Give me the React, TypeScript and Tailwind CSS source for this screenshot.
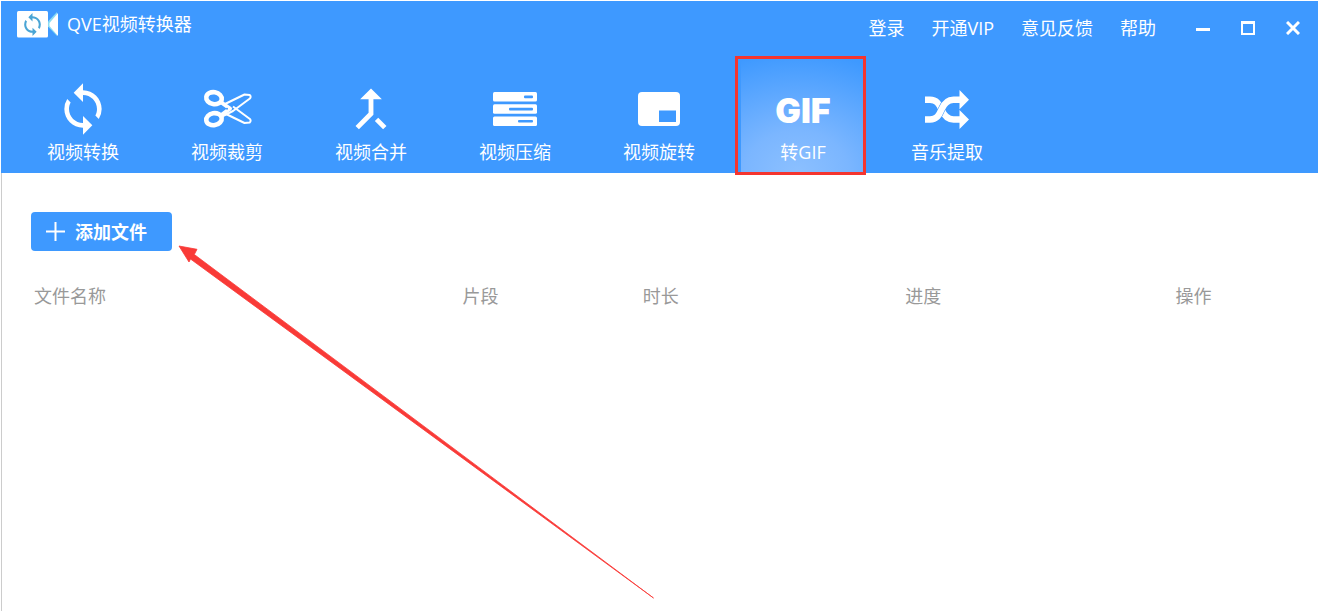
import React from 'react';
import { MdCallMerge, MdSync } from 'react-icons/md';

const ScissorsIcon: React.FC = () => (
    <svg width="50" height="42" viewBox="0 0 50 42" fill="none" stroke="currentColor">
        <ellipse cx="12" cy="10.2" rx="7.8" ry="6" strokeWidth="4.6" transform="rotate(10 12 10.2)" />
        <ellipse cx="12" cy="31.2" rx="7.8" ry="6" strokeWidth="4.6" transform="rotate(-10 12 31.2)" />
        <path d="M18 13.5 28 20.7 18 28" strokeWidth="4" strokeLinejoin="round" />
        <path d="M22 16.5 42.5 6.5l5.2.6c1.200 1 1.200 2.400.2 3.400L31 23 20 28.500" strokeWidth="2" strokeLinejoin="round" />
        <path d="M22 25 42.5 35l5.2-.6c1.200-1 1.200-2.400.2-3.400L31 18.500" strokeWidth="2" strokeLinejoin="round" />
        <circle cx="25" cy="20.7" r="1" fill="#3e99ff" stroke="none" />
    </svg>
);

const CompressIcon: React.FC = () => (
    <svg width="44" height="34" viewBox="0 0 44 34" fill="currentColor">
        <rect width="44" height="9.6" rx="1.5" />
        <rect y="12.2" width="44" height="9.6" rx="1.5" />
        <rect y="24.4" width="44" height="9.6" rx="1.5" />
        <g fill="#3e99ff">
            <rect x="31" y="3.6" width="9" height="2.6" rx="1" />
            <rect x="16" y="15.8" width="24" height="2.6" rx="1" />
            <rect x="25" y="28" width="15" height="2.6" rx="1" />
        </g>
    </svg>
);

const RotateIcon: React.FC = () => (
    <svg width="42" height="34" viewBox="0 0 42 34">
        <rect width="42" height="34" rx="4" fill="currentColor" />
        <rect x="21" y="18.5" width="17" height="11.5" fill="#3e99ff" />
    </svg>
);

const ShuffleIcon: React.FC = () => (
    <svg width="44" height="39" viewBox="0 0 44 39" fill="none" stroke="currentColor" strokeWidth="6.4">
        <path d="M0 9.7h5c6.5 0 9 4 11.5 9.8s5.5 10 12 10H36" />
        <path d="M5 29.5c6.5 0 9-4 11.5-10s5.5-9.800 12-9.800" stroke="#3e99ff" strokeWidth="7.4" />
        <path d="M0 29.5h5c6.5 0 9-4 11.5-10s5.5-9.800 12-9.800H36" />
        <path d="m34.5 0 9.5 9.7-9.5 9.6zM34.5 20l9.5 9.5-9.5 9.5z" fill="currentColor" stroke="none" />
    </svg>
);

const LogoIcon: React.FC = () => (
    <svg width="42" height="28" viewBox="0 0 42 28">
        <rect y="1" width="31" height="26.5" rx="1.5" fill="#fff" />
        <path d="M31 11.500 40 2v24l-9-9.500z" fill="#8adcf3" />
        <path d="M32.500 13 41 3v23l-8.500-10z" fill="#fff" />
        <MdSync x="3" y="2" size={25} color="#4aa5d5" />
    </svg>
);

interface Tool {
    label: string;
    icon: React.ReactNode;
    active?: boolean;
}

const tools: Tool[] = [
    { label: '视频转换', icon: <MdSync size={56} /> },
    { label: '视频裁剪', icon: <ScissorsIcon /> },
    { label: '视频合并', icon: <MdCallMerge size={58} /> },
    { label: '视频压缩', icon: <CompressIcon /> },
    { label: '视频旋转', icon: <RotateIcon /> },
    { label: '转GIF', icon: <span className="pt-1 font-['Inter',sans-serif] text-[34px] leading-8 font-black">GIF</span>, active: true },
    { label: '音乐提取', icon: <ShuffleIcon /> },
];

const menu = ['登录', '开通VIP', '意见反馈', '帮助'];

const columns = [
    { label: '文件名称', width: 'w-[33.3%]' },
    { label: '片段', width: 'w-[14%]' },
    { label: '时长', width: 'w-[20.4%]' },
    { label: '进度', width: 'w-[21%]' },
    { label: '操作', width: 'w-[11.3%]' },
];

const ToolTab: React.FC<{ tool: Tool }> = ({ tool }) => (
    <button
        type="button"
        className={`relative flex w-[124px] flex-col items-center pt-6 pb-[9px] ${tool.active
            ? 'bg-[radial-gradient(ellipse_120%_105%_at_45%_100%,#8cc0ff_0%,#7bb6ff_35%,#3e99ff_100%)]'
            : ''
            }`}
    >
        <span className="flex h-14 items-center justify-center">{tool.icon}</span>
        <span className="mt-[3px] h-6">{tool.label}</span>
        {/* Red callout frame */}
        {tool.active && <span className="pointer-events-none absolute -top-px -right-px -bottom-0.5 -left-1.5 border-3 border-[#f5352f]" />}
    </button>
);

export default function App() {
    return (
        <div className="relative min-h-screen bg-white pt-px pl-px font-['Open_Sans','Noto_Sans_CJK_SC',sans-serif] text-[18px] leading-6">
            <header className="bg-[#3e99ff] text-white">
                <div className="flex h-14 items-start justify-between pr-[3px] pl-4">
                    <div className="flex items-center gap-2 pt-[9px]">
                        <LogoIcon />
                        <h1>QVE视频转换器</h1>
                    </div>
                    <div className="flex items-center pt-[15px]">
                        <nav className="mr-6 flex gap-[27px]">
                            {menu.map((item) => (
                                <a key={item} href="#">{item}</a>
                            ))}
                        </nav>
                        <button type="button" aria-label="最小化" className="flex h-6 w-[45px] items-center justify-center">
                            <svg width="14" height="14" viewBox="0 0 14 14"><path d="M0 8.5h14" stroke="currentColor" strokeWidth="3" /></svg>
                        </button>
                        <button type="button" aria-label="最大化" className="flex h-6 w-[45px] items-center justify-center">
                            <svg width="14" height="14" viewBox="0 0 14 14" fill="none" stroke="currentColor"><path d="M1 1v12h12V1" strokeWidth="2" /><path d="M0 1.5h14" strokeWidth="3" /></svg>
                        </button>
                        <button type="button" aria-label="关闭" className="flex h-6 w-[45px] items-center justify-center">
                            <svg width="14" height="14" viewBox="0 0 14 14"><path d="m1 1 12 12M13 1 1 13" stroke="currentColor" strokeWidth="3" /></svg>
                        </button>
                    </div>
                </div>
                <div className="flex gap-5 pl-5">
                    {tools.map((tool) => (
                        <ToolTab key={tool.label} tool={tool} />
                    ))}
                </div>
            </header>

            <main className="min-h-[438px] border-l border-[#cccccc] pt-[39px] pl-[29px]">
                <button type="button" className="flex h-[39px] w-[141px] items-center gap-[10px] rounded bg-[#3e99ff] pl-[15px] font-bold text-white">
                    <svg width="19" height="19" viewBox="0 0 19 19"><path d="M9.5 0v19M0 9.5h19" stroke="currentColor" strokeWidth="2" /></svg>
                    添加文件
                </button>
                <table className="mt-[33px] w-full table-fixed text-left text-[#999999]">
                    <thead>
                        <tr>
                            {columns.map((col) => (
                                <th key={col.label} className={`${col.width} p-0 pl-[3px] font-normal`}>{col.label}</th>
                            ))}
                        </tr>
                    </thead>
                </table>
            </main>

            {/* Arrow pointing at the add button */}
            <svg className="pointer-events-none absolute top-[244px] left-[178px]" width="478" height="356" viewBox="178 244 478 356">
                <path d="m179 246 18 3.3-2.7 5.2L653.5 598 190.5 259l-1.5 3z" fill="#f93a37" stroke="#f93a37" strokeWidth=".8" />
            </svg>
        </div>
    );
}
